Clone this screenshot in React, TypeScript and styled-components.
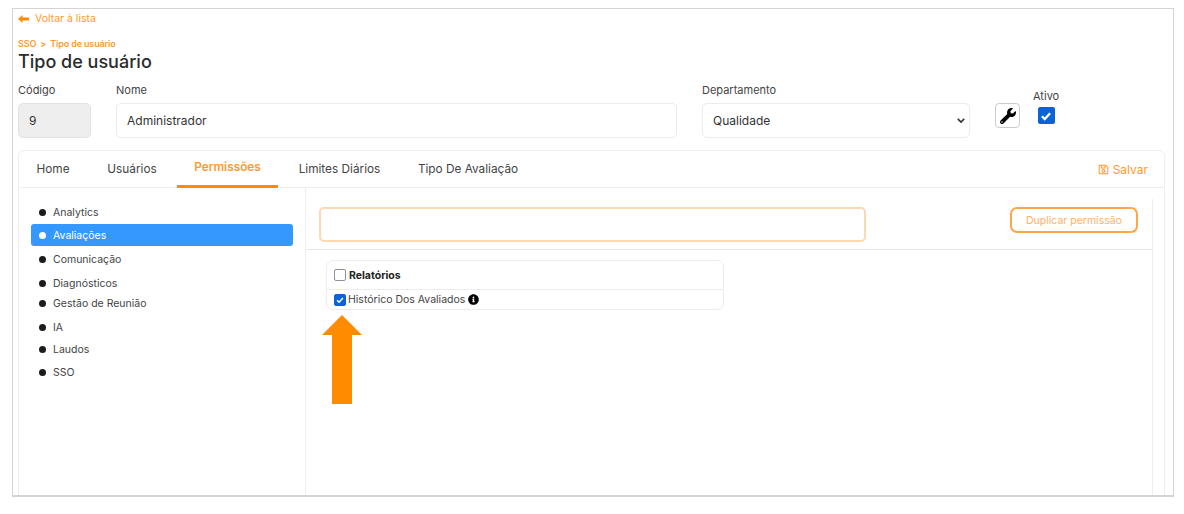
import React from 'react';
import styled, {createGlobalStyle} from "styled-components";
import {FaInfoCircle, FaRegSave, FaWrench} from "react-icons/fa";

const orange = "#ff9a2e"

const modules = [
    {name: "Analytics", height: 24},
    {name: "Avaliações", height: 22, active: true},
    {name: "Comunicação", height: 26},
    {name: "Diagnósticos", height: 22},
    {name: "Gestão de Reunião", height: 18},
    {name: "IA", height: 30},
    {name: "Laudos", height: 14},
    {name: "SSO", height: 32},
]

const tabs = [
    {name: "Home", width: 68},
    {name: "Usuários", width: 90},
    {name: "Permissões", width: 101, active: true},
    {name: "Limites Diários", width: 123},
    {name: "Tipo De Avaliação", width: 134},
]

export default function App() {
    return (
        <>
            <GlobalStyle/>
            <Frame>
                <BackLink>
                    <svg width="11" height="8" viewBox="0 0 11 8">
                        <path d="M0 4L4.5 0V2.5H11V5.5H4.5V8Z" fill="#ff8c00"/>
                    </svg>
                    Voltar à lista
                </BackLink>
                <Breadcrumb>SSO <span>&gt;</span> Tipo de usuário</Breadcrumb>
                <Title>Tipo de usuário</Title>
                <FormRow>
                    <Field $width="73px">
                        <Label>Código</Label>
                        <FakeInput $disabled>9</FakeInput>
                    </Field>
                    <Field $width="561px">
                        <Label>Nome</Label>
                        <FakeInput>Administrador</FakeInput>
                    </Field>
                    <Field $width="268px">
                        <Label>Departamento</Label>
                        <FakeInput>
                            Qualidade
                            <svg width="8" height="5" viewBox="0 0 10 6" fill="none">
                                <path d="M1 1l4 4 4-4" stroke="#333" strokeWidth="2"/>
                            </svg>
                        </FakeInput>
                    </Field>
                    <ToolButton><FaWrench size={16}/></ToolButton>
                    <ActiveField>
                        <Label>Ativo</Label>
                        <Check $size={17} $checked>
                            <svg width="14" height="14" viewBox="0 0 12 12" fill="none">
                                <path d="M2.5 6.2l2.4 2.4 4.6-5" stroke="#fff" strokeWidth="2"/>
                            </svg>
                        </Check>
                    </ActiveField>
                </FormRow>
                <Card>
                    <TabBar>
                        {tabs.map(tab => (
                            <Tab key={tab.name} $active={tab.active} $width={tab.width}>{tab.name}</Tab>
                        ))}
                        <SaveLink><FaRegSave size={11}/> Salvar</SaveLink>
                    </TabBar>
                    <CardBody>
                        <Sidebar>
                            {modules.map(item => (
                                <SideItem key={item.name} $active={item.active} $height={item.height}>
                                    <Dot $active={item.active}/>
                                    {item.name}
                                </SideItem>
                            ))}
                        </Sidebar>
                        <Panel>
                            <PanelTop>
                                <SearchBox/>
                                <DuplicateButton>Duplicar permissão</DuplicateButton>
                            </PanelTop>
                            <PermissionCard>
                                <PermissionHead>
                                    <Check $size={12}/>
                                    Relatórios
                                </PermissionHead>
                                <PermissionRow>
                                    <Check $size={12} $checked>
                                        <svg width="10" height="10" viewBox="0 0 12 12" fill="none">
                                            <path d="M2.5 6.2l2.4 2.4 4.6-5" stroke="#fff" strokeWidth="1.8"/>
                                        </svg>
                                    </Check>
                                    Histórico Dos Avaliados
                                    <InfoIcon size={11} color="#000"/>
                                </PermissionRow>
                            </PermissionCard>
                            <BigArrow width="40" height="89" viewBox="0 0 40 89">
                                <path d="M20 0L40 20H30V89H10V20H0Z" fill="#ff8c00"/>
                            </BigArrow>
                        </Panel>
                    </CardBody>
                </Card>
            </Frame>
        </>
    );
}

const GlobalStyle = createGlobalStyle`
    html, body {
        margin: 0;
        background: #fff;
    }

    body {
        font-family: Inter, "Open Sans", sans-serif;
        color: #333;
    }

    * {
        box-sizing: border-box;
    }
`

const Frame = styled.div`
    width: 1162px;
    height: 489px;
    margin: 8px 0 0 12px;
    padding: 0 8px 0 5px;
    border: 1px solid #d4d4d4;
    border-bottom-width: 2px;
    background: #fff;
    overflow: hidden;
`

const BackLink = styled.div`
    display: flex;
    align-items: center;
    gap: 6px;
    height: 19px;
    font-size: 10.5px;
    color: ${orange};
`

const Breadcrumb = styled.div`
    margin-top: 11px;
    height: 10px;
    font-size: 9px;
    line-height: 10px;
    font-weight: 600;
    letter-spacing: -0.15px;
    color: ${orange};

    span {
        margin: 0 2px;
    }
`

const Title = styled.h1`
    margin: 1px 0 0;
    font-size: 18px;
    line-height: 23px;
    font-weight: 500;
    color: #2b2b2b;
`

const FormRow = styled.div`
    display: flex;
    align-items: flex-start;
    margin-top: 10px;
`

const Field = styled.div<{ $width: string }>`
    width: ${props => props.$width};
    margin-right: 25px;
`

const Label = styled.div`
    height: 14px;
    font-size: 11px;
    line-height: 14px;
    color: #444;
`

const FakeInput = styled.div<{ $disabled?: boolean }>`
    display: flex;
    align-items: center;
    justify-content: space-between;
    height: 35px;
    margin-top: 6px;
    padding: 0 4px 0 10px;
    border: 1px solid ${props => props.$disabled ? "#e2e2e2" : "#ececec"};
    border-radius: 5px;
    background: ${props => props.$disabled ? "#eeeeee" : "#fff"};
    font-size: 12px;
    color: #333;
`

const ToolButton = styled.div`
    display: flex;
    align-items: center;
    justify-content: center;
    width: 25px;
    height: 25px;
    margin-top: 20px;
    border: 1px solid #ccc;
    border-radius: 4px;
    color: #000;
`

const ActiveField = styled.div`
    display: flex;
    flex-direction: column;
    align-items: center;
    margin: 6px 0 0 13px;
    gap: 4px;
`

const Check = styled.span<{ $size: number, $checked?: boolean }>`
    display: flex;
    flex: none;
    align-items: center;
    justify-content: center;
    width: ${props => props.$size}px;
    height: ${props => props.$size}px;
    border: 1px solid ${props => props.$checked ? "#0b63d8" : "#8f8f9d"};
    border-radius: 2px;
    background: ${props => props.$checked ? "#0b63d8" : "#fff"};
`

const Card = styled.div`
    width: 1147px;
    height: 361px;
    margin-top: 12px;
    border: 1px solid #eeeeee;
    border-radius: 6px 6px 0 0;
`

const TabBar = styled.div`
    display: flex;
    align-items: stretch;
    height: 37px;
    border-bottom: 1px solid #eeeeee;
`

const Tab = styled.div<{ $active?: boolean, $width: number }>`
    display: flex;
    align-items: center;
    justify-content: center;
    width: ${props => props.$width}px;
    padding-top: ${props => props.$active ? "0" : "2px"};
    padding-bottom: ${props => props.$active ? "2px" : "0"};
    border-bottom: 3px solid ${props => props.$active ? "#ff8c00" : "transparent"};
    margin-bottom: -1px;
    font-size: 11.8px;
    font-weight: ${props => props.$active ? 600 : 400};
    color: ${props => props.$active ? orange : "#444"};
`

const SaveLink = styled.div`
    display: flex;
    align-items: center;
    gap: 4px;
    margin-left: auto;
    padding-right: 16px;
    font-size: 12px;
    color: ${orange};
`

const CardBody = styled.div`
    display: flex;
    height: 323px;
`

const Sidebar = styled.ul`
    width: 287px;
    margin: 0;
    padding: 12px 12px 0;
    border-right: 1px solid #eeeeee;
    list-style: none;
`

const SideItem = styled.li<{ $active?: boolean, $height: number }>`
    display: flex;
    align-items: center;
    gap: 7px;
    height: ${props => props.$height}px;
    padding-left: 8px;
    border-radius: 3px;
    background: ${props => props.$active ? "#3399ff" : "transparent"};
    font-size: 10.5px;
    color: ${props => props.$active ? "#fff" : "#444"};
`

const Dot = styled.span<{ $active?: boolean }>`
    width: 7px;
    height: 7px;
    border-radius: 50%;
    background: ${props => props.$active ? "#fff" : "#1c1c1c"};
`

const Panel = styled.div`
    position: relative;
    width: 847px;
    margin-top: 11px;
    border-right: 1px solid #eeeeee;
`

const PanelTop = styled.div`
    display: flex;
    align-items: flex-start;
    justify-content: space-between;
    height: 51px;
    padding: 8px 14px 0 13px;
    border-bottom: 1px solid #e6e6e6;
`

const SearchBox = styled.div`
    width: 547px;
    height: 35px;
    border: 2px solid #fdd8b0;
    border-radius: 5px;
`

const DuplicateButton = styled.button`
    width: 128px;
    height: 26px;
    padding: 0;
    border: 2px solid #ffa647;
    border-radius: 7px;
    background: #fff;
    font-family: inherit;
    font-size: 10.5px;
    color: #ffb263;
`

const PermissionCard = styled.div`
    width: 398px;
    margin: 10px 0 0 20px;
    border: 1px solid #ececec;
    border-radius: 7px;
`

const PermissionHead = styled.div`
    display: flex;
    align-items: center;
    gap: 3px;
    height: 29px;
    padding-left: 7px;
    border-bottom: 1px solid #ececec;
    font-size: 10.5px;
    font-weight: 700;
    color: #222;
`

const PermissionRow = styled.div`
    display: flex;
    align-items: center;
    gap: 2px;
    height: 19px;
    padding-left: 7px;
    font-size: 10.5px;
    color: #444;
`

const InfoIcon = styled(FaInfoCircle)`
    margin-left: 1px;
`

const BigArrow = styled.svg`
    position: absolute;
    left: 16px;
    top: 116px;
    display: block;
`
